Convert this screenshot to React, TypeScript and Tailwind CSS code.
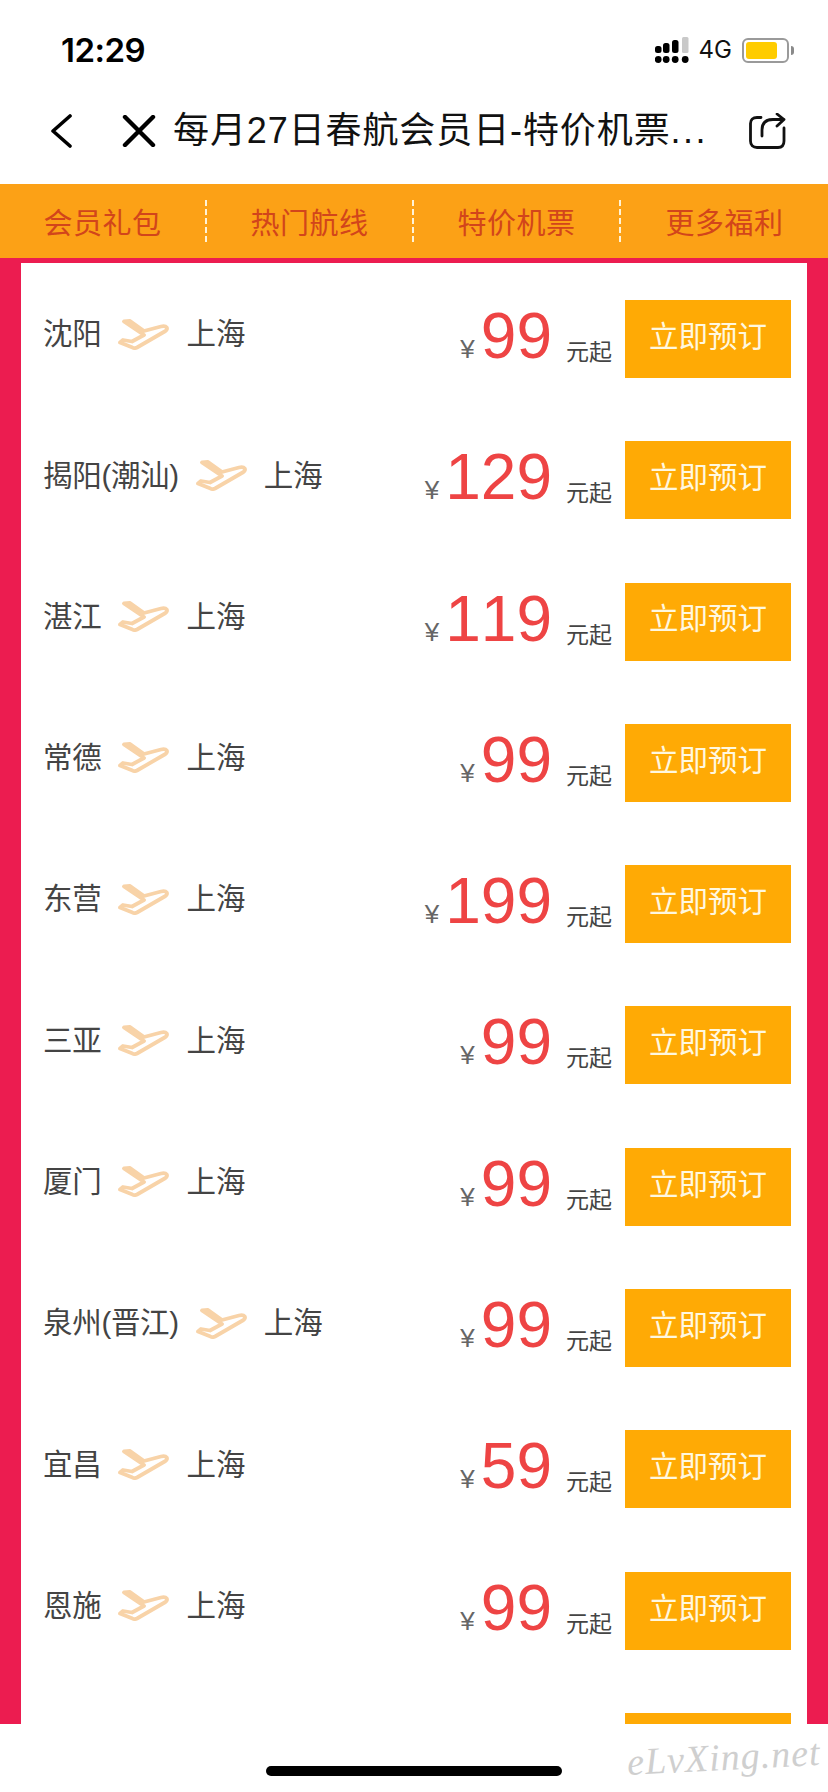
const font = { cjk: "font-['Liberation_Sans','Noto_Sans_CJK_SC',sans-serif]" };

const tabs = ["会员礼包", "热门航线", "特价机票", "更多福利"];

const routes = [
  { from: "沈阳", price: "99" },
  { from: "揭阳(潮汕)", price: "129" },
  { from: "湛江", price: "119" },
  { from: "常德", price: "99" },
  { from: "东营", price: "199" },
  { from: "三亚", price: "99" },
  { from: "厦门", price: "99" },
  { from: "泉州(晋江)", price: "99" },
  { from: "宜昌", price: "59" },
  { from: "恩施", price: "99" },
];

function PlaneIcon() {
  return (
    <svg width="52" height="31" viewBox="0 0 52 31" fill="none" stroke="#f8d3a8" strokeWidth="3.8" strokeLinejoin="round" strokeLinecap="round" className="shrink-0">
      <path d="M7 2.5 L13 2 L27 12 L44 7.5 C50 6 51.5 10 48.5 12 L20 28.5 C18.5 29.3 17 29.3 15.5 28.6 L3 23.5 L6 21 L15 22.5 L27 16 L7 2.5 Z" />
    </svg>
  );
}

function SignalIcon() {
  return (
    <svg width="34" height="26" viewBox="0 0 34 26">
      <rect x="0" y="9" width="6.5" height="7" rx="2.5" fill="#000" />
      <rect x="8" y="6" width="6.5" height="10" rx="2.5" fill="#000" />
      <rect x="17" y="3" width="6.5" height="13" rx="2.5" fill="#000" />
      <rect x="27" y="0" width="6.5" height="16" rx="1.5" fill="#c9c9c9" />
      <circle cx="3.2" cy="22.5" r="3.4" fill="#000" />
      <circle cx="11.2" cy="22.5" r="3.4" fill="#000" />
      <circle cx="20.2" cy="22.5" r="3.4" fill="#000" />
      <circle cx="30.2" cy="22.5" r="3.4" fill="#000" />
    </svg>
  );
}

function Battery() {
  return (
    <div className="flex items-center">
      <div className="w-[47px] h-[25px] rounded-[6px] border-2 border-[#9a9a9a] p-[2px] flex">
        <div className="w-[31px] h-full rounded-[3px] bg-[#ffcc00]" />
      </div>
      <div className="ml-[2px] w-[3px] h-[9px] rounded-r-full bg-[#8a8a8a]" />
    </div>
  );
}

function RouteRow({ from, price }: { from: string; price: string }) {
  return (
    <div className="h-[141.3px] pl-[22px] pr-[16px] flex items-start justify-between shrink-0">
      <div className="flex items-center h-[68px] text-[29.5px] text-[#444444] leading-none">
        <span className="tracking-[-0.3px]">{from}</span>
        <span className="ml-[16px] mr-[17px] flex"><PlaneIcon /></span>
        <span>上海</span>
      </div>
      <div className="flex items-start">
        <div className="flex items-baseline mr-[13px] h-[78px] pt-[4px]">
          <span className="text-[26px] text-[#666666] mr-[6px]">¥</span>
          <span className="text-[64px] leading-[64px] text-[#ee4444] [font-kerning:none]">{price}</span>
          <span className="text-[23px] text-[#444444] ml-[14px] relative top-[2px]">元起</span>
        </div>
        <button className="w-[166px] h-[78px] bg-[#ffaa05] text-[29.5px] text-[#fff8e0] flex items-center justify-center pb-[4px]">
          立即预订
        </button>
      </div>
    </div>
  );
}

export default function App() {
  return (
    <div className={`${font.cjk} relative w-[828px] h-[1792px] overflow-hidden bg-white flex flex-col`}>
      {/* status bar */}
      <div className="h-[92px] shrink-0 flex items-start justify-between pl-[61px] pr-[34px] pt-[30px]">
        <span className="text-[33px] leading-[40px] font-semibold font-['Inter',sans-serif] text-black tracking-[-0.5px]">12:29</span>
        <div className="flex items-center gap-[10px] pt-[7px]">
          <SignalIcon />
          <span className="text-[24px] leading-none font-['Inter',sans-serif] text-[#111111]">4G</span>
          <Battery />
        </div>
      </div>

      {/* title bar */}
      <div className="h-[92px] shrink-0 flex items-center pl-[50px] pr-[42px] pb-[14px]">
        <svg width="22" height="34" viewBox="0 0 22 34" fill="none" stroke="#000" strokeWidth="3.6" strokeLinecap="round" strokeLinejoin="round">
          <path d="M20 2 L3 17 L20 32" />
        </svg>
        <svg width="34" height="32" viewBox="0 0 34 32" fill="none" stroke="#000" strokeWidth="4.4" strokeLinecap="round" className="ml-[50px]">
          <path d="M3 2 L31 30 M31 2 L3 30" />
        </svg>
        <span className="ml-[17px] text-[36px] leading-none tracking-[0.9px] text-[#111111] whitespace-nowrap">
          每月27日春航会员日-特价机票<span className="tracking-[2.5px]">...</span>
        </span>
        <svg width="37" height="36" viewBox="0 0 37 36" fill="none" stroke="#111" strokeWidth="2.8" strokeLinecap="round" strokeLinejoin="round" className="ml-auto">
          <path d="M12 4.5 H8 C4 4.5 1.5 6.5 1.5 10.5 V28 C1.5 32 4 34.5 8 34.5 H29 C33 34.5 35 32 35 28 V15" />
          <path d="M13 23 V17 C13 10 17 6.5 24 6.5 H35 M28 1 L35 6.5 L28 13" />
        </svg>
      </div>

      {/* section tabs */}
      <div className="h-[74px] shrink-0 bg-[#fca116] flex items-center">
        {tabs.map((t, i) => (
          <div
            key={t}
            className={`w-[207px] h-[42px] flex items-center justify-center pt-[8px] text-[29px] tracking-[0.5px] text-[#d2451b] border-dashed border-[#fff3d6] ${i < 3 ? "border-r-2" : ""}`}
          >
            {t}
          </div>
        ))}
      </div>

      {/* route list */}
      <div className="flex-1 min-h-0 bg-[#ec1c50] px-[21px] pt-[5px] overflow-hidden">
        <div className="bg-white h-full pt-[37px] flex flex-col overflow-hidden">
          {routes.map((r) => (
            <RouteRow key={r.from} from={r.from} price={r.price} />
          ))}
          <div className="pr-[16px] flex justify-end shrink-0">
            <div className="w-[166px] h-[78px] bg-[#ffaa05]" />
          </div>
        </div>
      </div>

      {/* home indicator */}
      <div className="h-[68px] shrink-0 flex justify-center pt-[42px]">
        <div className="w-[296px] h-[10px] rounded-full bg-black" />
      </div>

      <span className="absolute left-[627px] top-[1738px] text-[38px] leading-none italic tracking-[1px] -rotate-3 font-['Liberation_Serif',serif] text-[#cfcfcf] whitespace-nowrap">eLvXing.net</span>
    </div>
  );
}
